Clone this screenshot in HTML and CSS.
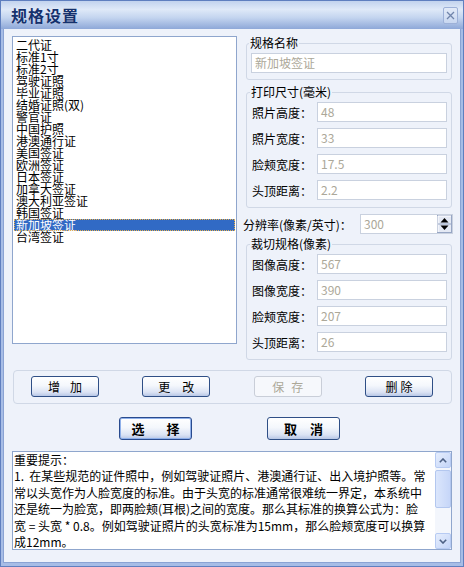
FILE: index.html
```html
<!DOCTYPE html>
<html lang="zh-CN">
<head>
    <meta charset="UTF-8">
    <meta name="viewport" content="width=device-width, initial-scale=1.0">
    <title>规格设置</title>
    <link rel="stylesheet" href="styles.css">
</head>
<body>
    <div class="window">
        <div class="titlebar">
            <span class="title">规格设置</span>
            <span class="close" aria-label="关闭">
                <svg width="9" height="9" viewBox="0 0 9 9"><path d="M1 1l7 7M8 1l-7 7" stroke="#7084ab" stroke-width="1.3" fill="none"/></svg>
            </span>
        </div>

        <div class="client">
            <div class="top">
                <ul class="list">
                    <li>二代证</li>
                    <li>标准1寸</li>
                    <li>标准2寸</li>
                    <li>驾驶证照</li>
                    <li>毕业证照</li>
                    <li>结婚证照(双)</li>
                    <li>警官证</li>
                    <li>中国护照</li>
                    <li>港澳通行证</li>
                    <li>美国签证</li>
                    <li>欧洲签证</li>
                    <li>日本签证</li>
                    <li>加拿大签证</li>
                    <li>澳大利亚签证</li>
                    <li>韩国签证</li>
                    <li class="selected">新加坡签证</li>
                    <li>台湾签证</li>
                </ul>

                <div class="side">
                    <fieldset class="group name-group">
                        <legend>规格名称</legend>
                        <div class="field wide">新加坡签证</div>
                    </fieldset>

                    <fieldset class="group print-group">
                        <legend>打印尺寸(毫米)</legend>
                        <div class="rows">
                            <div class="row"><span class="label">照片高度：</span><span class="field">48</span></div>
                            <div class="row"><span class="label">照片宽度：</span><span class="field">33</span></div>
                            <div class="row"><span class="label">脸颊宽度：</span><span class="field">17.5</span></div>
                            <div class="row"><span class="label">头顶距离：</span><span class="field">2.2</span></div>
                        </div>
                    </fieldset>

                    <div class="res-row">
                        <span>分辨率(像素/英寸)：</span>
                        <span class="spin">
                            <span>300</span>
                            <svg class="spin-btn" width="15" height="18" viewBox="0 0 15 18">
                                <rect x="0.5" y="0.5" width="14" height="17" fill="#e4e9f4" stroke="#97a6c4"/>
                                <path d="M1 1h13M1 1v16" stroke="#fff"/>
                                <path d="M1 9h13" stroke="#97a6c4"/>
                                <path d="M3.5 7.5h8l-4-4.5z" fill="#000"/>
                                <path d="M3.5 10.5h8l-4 4.5z" fill="#000"/>
                            </svg>
                        </span>
                    </div>

                    <fieldset class="group crop-group">
                        <legend>裁切规格(像素)</legend>
                        <div class="rows">
                            <div class="row"><span class="label">图像高度：</span><span class="field">567</span></div>
                            <div class="row"><span class="label">图像宽度：</span><span class="field">390</span></div>
                            <div class="row"><span class="label">脸颊宽度：</span><span class="field">207</span></div>
                            <div class="row"><span class="label">头顶距离：</span><span class="field">26</span></div>
                        </div>
                    </fieldset>
                </div>
            </div>

            <div class="btn-group">
                <button class="btn gap-10"><span>增</span><span>加</span></button>
                <button class="btn gap-12"><span>更</span><span>改</span></button>
                <button class="btn gap-7" disabled><span>保</span><span>存</span></button>
                <button class="btn gap-3"><span>删</span><span>除</span></button>
            </div>

            <div class="actions">
                <button class="btn big default gap-22"><span>选</span><span>择</span></button>
                <button class="btn big gap-13"><span>取</span><span>消</span></button>
            </div>

            <div class="notes">
                <div class="notes-text">
                    重要提示：<br>
                    1.&nbsp; 在某些规范的证件照中，例如驾驶证照片、港澳通行证、出入境护照等。常<br>
                    常以头宽作为人脸宽度的标准。由于头宽的标准通常很难统一界定，本系统中<br>
                    还是统一为脸宽，即两脸颊(耳根)之间的宽度。那么其标准的换算公式为：脸<br>
                    宽 = 头宽 * 0.8。例如驾驶证照片的头宽标准为15mm，那么脸颊宽度可以换算<br>
                    成12mm。
                </div>
                <div class="scrollbar">
                    <div class="scroll-btn">
                        <svg width="8" height="5" viewBox="0 0 8 5"><path d="M0.8 4.2l3.2-3.2 3.2 3.2" stroke="#4d6185" stroke-width="1.6" fill="none"/></svg>
                    </div>
                    <div class="thumb"></div>
                    <div class="track"></div>
                    <div class="scroll-btn">
                        <svg width="8" height="5" viewBox="0 0 8 5"><path d="M0.8 0.8l3.2 3.2 3.2-3.2" stroke="#4d6185" stroke-width="1.6" fill="none"/></svg>
                    </div>
                </div>
            </div>
        </div>
    </div>
</body>
</html>
```

FILE: styles.css
```css
* {
    box-sizing: border-box;
}

body {
    margin: 0;
    font-family: "Noto Sans CJK SC", "Noto Sans", sans-serif;
    font-size: 12px;
    color: #000;
    background: #fff;
}

.window {
    width: 464px;
    height: 567px;
    display: flex;
    flex-direction: column;
    background: #a7bde6;
    border: 1px solid #5f7fbf;
}

/* title bar */
.titlebar {
    height: 28px;
    flex: none;
    display: flex;
    align-items: center;
    justify-content: space-between;
    padding: 0 5px 0 10px;
    background: linear-gradient(#c2d3ee, #dfe9f8 30%, #c3d4ef 60%, #8ea8d8);
}

.title {
    font-size: 16px;
    font-weight: bold;
    letter-spacing: 1px;
    color: #15316d;
    text-shadow: 0 0 1px rgba(255, 255, 255, 0.6);
}

.close {
    width: 15px;
    height: 17px;
    display: flex;
    align-items: center;
    justify-content: center;
    border: 1px solid #9db1d8;
    border-radius: 2px;
    background: linear-gradient(#e2eaf8, #c8d7f0);
}

/* client area */
.client {
    flex: 1;
    margin: 0 2px 3px;
    padding: 7px 7px 0 8px;
    background: #eef2fa;
    border: 1px solid #8aa3d3;
    border-top: none;
}

.top {
    display: flex;
    align-items: flex-start;
    gap: 6px;
}

.list {
    width: 225px;
    height: 308px;
    margin: 0;
    padding: 2px 1px;
    list-style: none;
    background: #fff;
    border: 1px solid #8fa6cd;
}

.list li {
    height: 12px;
    line-height: 12px;
    padding-left: 2px;
    white-space: nowrap;
}

.list li.selected {
    background: #316ac5;
    color: #fff;
    outline: 1px dotted #e8b04c;
    outline-offset: -1px;
}

.side {
    width: 210px;
    display: flex;
    flex-direction: column;
}

.group {
    min-width: 0;
    margin: 0 1px 0 3px;
    padding: 4px 4px 7px 5px;
    border: 1px solid #d0d8e6;
    border-radius: 3px;
}

.group legend {
    margin-left: -2px;
    padding: 0 1px;
    line-height: 12px;
}

.name-group {
    margin-top: 1px;
    padding: 4px 4px 6px 4px;
}

.print-group {
    margin-top: 6px;
}

.crop-group {
    margin-top: 4px;
}

.rows {
    display: flex;
    flex-direction: column;
    gap: 6px;
}

.row {
    display: flex;
    align-items: center;
    height: 20px;
}

.label {
    width: 65px;
}

.field {
    height: 20px;
    padding-left: 3px;
    line-height: 18px;
    color: #aca899;
    background: #fff;
    border: 1px solid #c9d1df;
}

.row .field {
    width: 130px;
}

.wide {
    width: 196px;
}

.res-row {
    height: 20px;
    margin-top: 6px;
    display: flex;
    align-items: center;
    justify-content: space-between;
}

.spin {
    width: 93px;
    height: 20px;
    padding-left: 3px;
    display: flex;
    justify-content: space-between;
    line-height: 18px;
    color: #aca899;
    background: #fff;
    border: 1px solid #c9d1df;
}

.spin-btn {
    display: block;
}

/* buttons */
.btn-group {
    height: 34px;
    margin: 10px 1px 0 1px;
    padding: 5px 18px 0 17px;
    display: flex;
    justify-content: space-between;
    border: 1px solid #d0d8e6;
    border-radius: 4px;
}

.btn {
    width: 68px;
    height: 21px;
    padding: 0;
    display: flex;
    align-items: center;
    justify-content: center;
    font: inherit;
    color: #000;
    border: 1px solid #2f4f86;
    border-radius: 3px;
    background: linear-gradient(#ffffff, #f4f7fc 45%, #dbe3f4 80%, #b8c7e6);
}

.btn:disabled {
    color: #aca899;
    border-color: #c9ced8;
    background: #f6f8fc;
}

.gap-3 { gap: 3px; }
.gap-7 { gap: 7px; }
.gap-10 { gap: 10px; }
.gap-12 { gap: 12px; }
.gap-13 { gap: 13px; }
.gap-22 { gap: 22px; }

.actions {
    margin-top: 13px;
    padding-right: 6px;
    display: flex;
    justify-content: center;
    gap: 75px;
}

.big {
    width: 73px;
    height: 23px;
    font-size: 13px;
    font-weight: bold;
}

.default {
    border-color: #294b8e;
    box-shadow: inset 0 0 0 1px #8fb0ea;
}

/* notes box */
.notes {
    height: 99px;
    margin: 11px 1px 0 0;
    display: flex;
    background: #fff;
    border: 1px solid #8fa6cd;
}

.notes-text {
    flex: 1;
    padding-left: 1px;
    line-height: 16.4px;
    white-space: nowrap;
    overflow: hidden;
}

.scrollbar {
    width: 16px;
    display: flex;
    flex-direction: column;
    background: #f3f6fc;
}

.scroll-btn {
    height: 16px;
    display: flex;
    align-items: center;
    justify-content: center;
    border: 1px solid #b7cbf3;
    border-radius: 2px;
    background: linear-gradient(135deg, #e6eefd, #c4d5f8);
}

.thumb {
    height: 38px;
    margin-top: 2px;
    border: 1px solid #b3c7ef;
    border-radius: 2px;
    background: linear-gradient(to right, #dbe6fc, #c6d6f8);
}

.track {
    flex: 1;
}
```
